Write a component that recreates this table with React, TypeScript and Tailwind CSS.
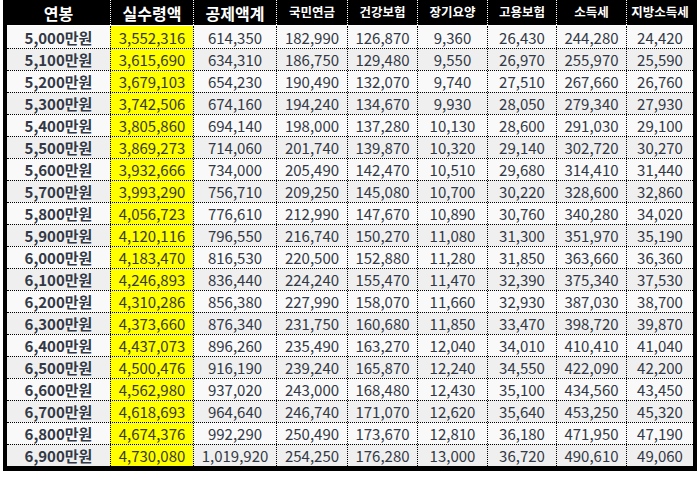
const heads = [
  { t: '연봉', big: true },
  { t: '실수령액', big: true },
  { t: '공제액계', big: true },
  { t: '국민연금', big: false },
  { t: '건강보험', big: false },
  { t: '장기요양', big: false },
  { t: '고용보험', big: false },
  { t: '소득세', big: false },
  { t: '지방소득세', big: false },
];

const rows = [
  ['5,000', '3,552,316', '614,350', '182,990', '126,870', '9,360', '26,430', '244,280', '24,420'],
  ['5,100', '3,615,690', '634,310', '186,750', '129,480', '9,550', '26,970', '255,970', '25,590'],
  ['5,200', '3,679,103', '654,230', '190,490', '132,070', '9,740', '27,510', '267,660', '26,760'],
  ['5,300', '3,742,506', '674,160', '194,240', '134,670', '9,930', '28,050', '279,340', '27,930'],
  ['5,400', '3,805,860', '694,140', '198,000', '137,280', '10,130', '28,600', '291,030', '29,100'],
  ['5,500', '3,869,273', '714,060', '201,740', '139,870', '10,320', '29,140', '302,720', '30,270'],
  ['5,600', '3,932,666', '734,000', '205,490', '142,470', '10,510', '29,680', '314,410', '31,440'],
  ['5,700', '3,993,290', '756,710', '209,250', '145,080', '10,700', '30,220', '328,600', '32,860'],
  ['5,800', '4,056,723', '776,610', '212,990', '147,670', '10,890', '30,760', '340,280', '34,020'],
  ['5,900', '4,120,116', '796,550', '216,740', '150,270', '11,080', '31,300', '351,970', '35,190'],
  ['6,000', '4,183,470', '816,530', '220,500', '152,880', '11,280', '31,850', '363,660', '36,360'],
  ['6,100', '4,246,893', '836,440', '224,240', '155,470', '11,470', '32,390', '375,340', '37,530'],
  ['6,200', '4,310,286', '856,380', '227,990', '158,070', '11,660', '32,930', '387,030', '38,700'],
  ['6,300', '4,373,660', '876,340', '231,750', '160,680', '11,850', '33,470', '398,720', '39,870'],
  ['6,400', '4,437,073', '896,260', '235,490', '163,270', '12,040', '34,010', '410,410', '41,040'],
  ['6,500', '4,500,476', '916,190', '239,240', '165,870', '12,240', '34,550', '422,090', '42,200'],
  ['6,600', '4,562,980', '937,020', '243,000', '168,480', '12,430', '35,100', '434,560', '43,450'],
  ['6,700', '4,618,693', '964,640', '246,740', '171,070', '12,620', '35,640', '453,250', '45,320'],
  ['6,800', '4,674,376', '992,290', '250,490', '173,670', '12,810', '36,180', '471,950', '47,190'],
  ['6,900', '4,730,080', '1,019,920', '254,250', '176,280', '13,000', '36,720', '490,610', '49,060'],
];

const cols = 'grid grid-cols-[103px_83px_83px_71px_70px_70px_69px_70px_67px]';

export default function App() {
  return (
    <div className="min-h-[500px] w-[700px] bg-white font-['Noto_Sans_CJK_KR','Noto_Sans',sans-serif]">
      <div className="ml-[3px] w-[694px] border-x-4 border-b-[5px] border-black">
        {/* Header */}
        <div className={`${cols} h-[26px] border-b border-white bg-black text-white`}>
          {heads.map((h, i) => (
            <div
              key={h.t}
              className={`flex items-center justify-center font-bold leading-none ${h.big ? 'text-[16px]' : 'text-[12.5px]'} ${i > 0 ? 'border-l border-dotted border-white' : ''}`}
            >
              {h.t}
            </div>
          ))}
        </div>

        {/* Rows */}
        {rows.map((r, ri) => (
          <div
            key={r[0]}
            className={`${cols} h-[22px] ${ri > 0 ? 'border-t border-dotted border-black' : ''} ${ri % 2 === 0 ? 'bg-[#f9f9f9]' : 'bg-[#efefef]'} text-[15px] leading-none text-[#323845]`}
          >
            {r.map((c, ci) => (
              <div
                key={ci}
                className={`flex items-center justify-center ${ci > 0 ? 'border-l border-dotted border-black' : ''} ${ci === 1 ? 'bg-[#ffff00] text-[#3a3a2a]' : ''} ${ci === 0 ? 'font-bold' : ''}`}
              >
                {ci === 0 ? `${c}만원` : c}
              </div>
            ))}
          </div>
        ))}
      </div>
    </div>
  );
}
